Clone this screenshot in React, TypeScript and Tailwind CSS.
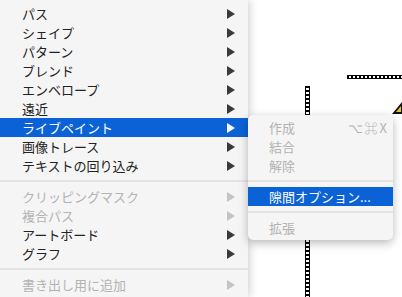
import { Fragment } from "react";

type Item = { label: string; disabled?: boolean; active?: boolean; arrow?: boolean; shortcut?: string } | "sep";

const mainItems: Item[] = [
  { label: "パス", arrow: true },
  { label: "シェイプ", arrow: true },
  { label: "パターン", arrow: true },
  { label: "ブレンド", arrow: true },
  { label: "エンベロープ", arrow: true },
  { label: "遠近", arrow: true },
  { label: "ライブペイント", arrow: true, active: true },
  { label: "画像トレース", arrow: true },
  { label: "テキストの回り込み", arrow: true },
  "sep",
  { label: "クリッピングマスク", arrow: true, disabled: true },
  { label: "複合パス", arrow: true, disabled: true },
  { label: "アートボード", arrow: true },
  { label: "グラフ", arrow: true },
  "sep",
  { label: "書き出し用に追加", arrow: true, disabled: true },
];

const subItems: Item[] = [
  { label: "作成", disabled: true, shortcut: "⌥⌘X" },
  { label: "結合", disabled: true },
  { label: "解除", disabled: true },
  "sep",
  { label: "隙間オプション...", active: true },
  "sep",
  { label: "拡張", disabled: true },
];

function Arrow({ color }: { color: string }) {
  return (
    <svg width="8" height="10" viewBox="0 0 8 10" className="shrink-0">
      <polygon points="0,0 8,5 0,10" fill={color} />
    </svg>
  );
}

function Row({ item, indent }: { item: Exclude<Item, "sep">; indent: string }) {
  const text = item.active ? "text-white" : item.disabled ? "text-[#b3b3b3]" : "text-[#222222]";
  const arrowColor = item.active ? "#ffffff" : item.disabled ? "#c4c4c4" : "#3a3a3a";
  return (
    <div className={`flex h-[19px] items-center ${indent} ${item.active ? "bg-[#0b62d6]" : ""}`}>
      <span className={`flex-1 ${text}`}>{item.label}</span>
      {item.shortcut && <span className="mr-[4px] tracking-[2px] text-[#b3b3b3]">{item.shortcut}</span>}
      {item.arrow && (
        <span className="mr-[13px]">
          <Arrow color={arrowColor} />
        </span>
      )}
    </div>
  );
}

function Separator() {
  return (
    <div className="flex h-[12px] items-center">
      <div className="h-[2px] w-full bg-[#e3e3e3]" />
    </div>
  );
}

export default function App() {
  return (
    <div
      className="relative h-[297px] w-[402px] overflow-hidden bg-white text-[13px] leading-none"
      style={{ fontFamily: '"Noto Sans CJK JP", "Liberation Sans", sans-serif' }}
    >
      {/* canvas artwork */}
      <div className="absolute left-[305px] top-[86px] h-[211px] w-[5px] border-x border-black bg-[repeating-linear-gradient(to_bottom,#000_0px,#000_2px,#fff_2px,#fff_4px)]" />
      <div className="absolute left-[347px] top-[75px] h-[4px] w-[55px] border-y border-black bg-[repeating-linear-gradient(to_right,#000_0px,#000_2px,#fff_2px,#fff_4px)]" />
      <svg className="absolute left-[392px] top-[100px]" width="10" height="14" viewBox="0 0 10 14">
        <polygon points="0,14 10,2 10,14" fill="#111" />
        <polygon points="4,12 9,6 9,12" fill="#e8c21c" />
      </svg>

      {/* main menu */}
      <div className="absolute left-0 top-0 h-[297px] w-[248px] bg-[#f5f5f5] pt-[4px] shadow-[2px_0_8px_rgba(0,0,0,0.18)]">
        {mainItems.map((item, i) => (
          <Fragment key={i}>
            {item === "sep" ? <Separator /> : <Row item={item} indent="pl-[22px]" />}
          </Fragment>
        ))}
      </div>

      {/* submenu */}
      <div className="absolute left-[248px] top-[115px] w-[145px] overflow-hidden rounded-[5px] bg-[#f5f5f5] py-[3px] shadow-[0_3px_10px_rgba(0,0,0,0.28)]">
        {subItems.map((item, i) => (
          <Fragment key={i}>
            {item === "sep" ? <Separator /> : <Row item={item} indent="pl-[21px]" />}
          </Fragment>
        ))}
      </div>
    </div>
  );
}
